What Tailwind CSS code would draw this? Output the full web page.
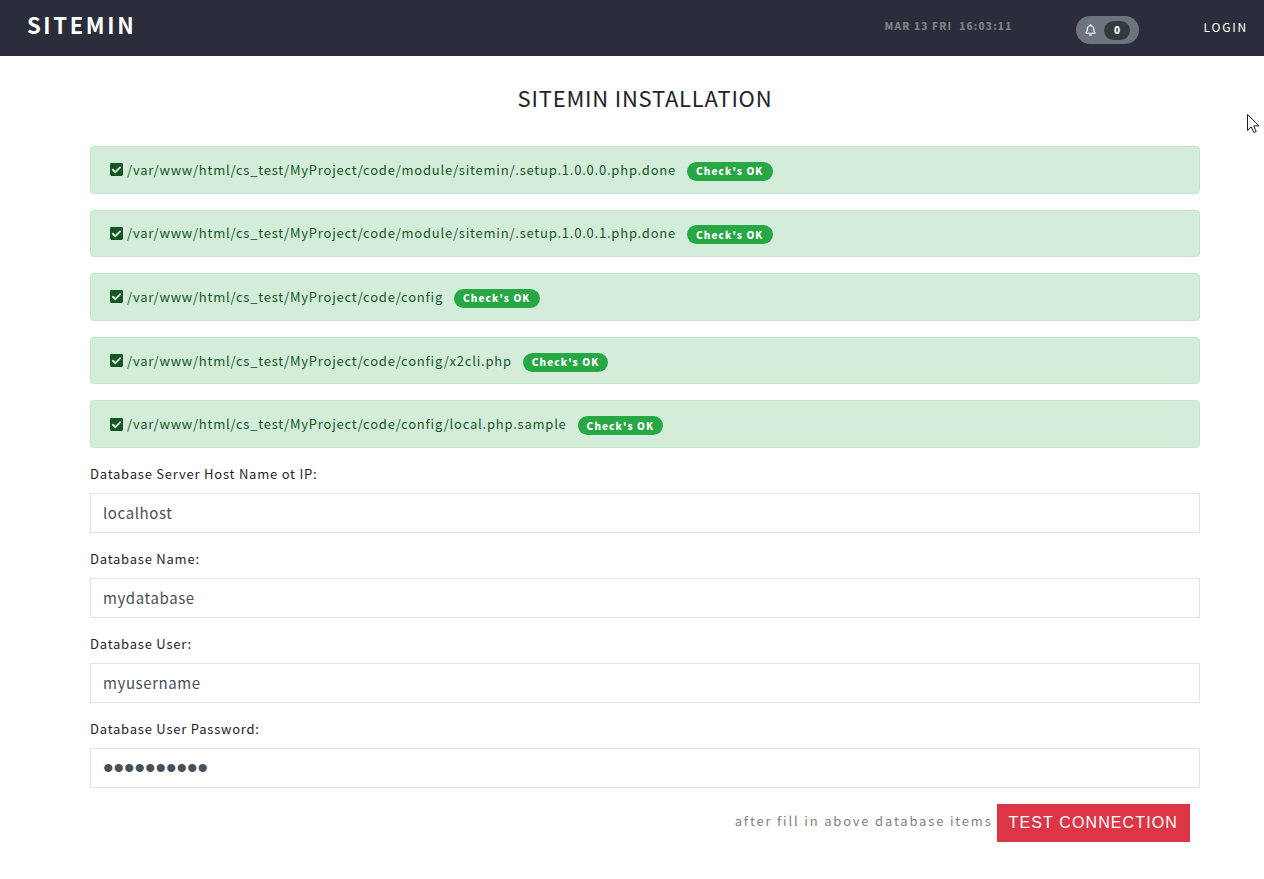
<!DOCTYPE html>
<html lang="en">
<head>
<meta charset="utf-8">
<meta name="viewport" content="width=device-width, initial-scale=1">
<title>Sitemin Installation</title>
<script src="https://cdn.jsdelivr.net/npm/@tailwindcss/browser@4"></script>
</head>
<body class="min-h-screen bg-white font-['Noto_Sans_CJK_SC',sans-serif] text-[13px] leading-5 tracking-[0.06em] text-[#212529]">
<svg class="hidden">
  <symbol id="check" viewBox="0 32 448 448"><path fill="currentColor" d="M400 480H48c-26.500 0-48-21.500-48-48V80c0-26.500 21.500-48 48-48h352c26.500 0 48 21.500 48 48v352c0 26.500-21.500 48-48 48zm-204.700-98.100l184-184c6.200-6.200 6.200-16.400 0-22.600l-22.600-22.600c-6.200-6.200-16.400-6.200-22.600 0L184 302.700l-70.100-70.100c-6.200-6.200-16.400-6.200-22.600 0l-22.600 22.600c-6.200 6.200-6.200 16.400 0 22.600l104 104c6.200 6.300 16.400 6.300 22.600 .1z"/></symbol>
</svg>

<header class="flex h-14 items-center bg-[#2c2d3a] pr-4 pl-[27px] text-white">
  <a href="#" class="mb-2 text-[22px] leading-8 font-bold tracking-[0.12em]">SITEMIN</a>
  <div class="ml-auto flex items-center">
    <time class="mr-16 mb-1 text-[10px] font-black tracking-[0.12em] whitespace-pre text-[#808080]">MAR 13 FRI  16:03:11</time>
    <button class="mt-1 mr-16 flex h-7 items-center gap-2 rounded-full bg-[#6c757d] px-[9px]" aria-label="Notifications">
      <svg class="h-[12px] w-[11px]" viewBox="0 0 448 512" aria-hidden="true"><path fill="currentColor" d="M439.390 362.290c-19.320-20.760-55.470-51.990-55.470-154.290 0-77.700-54.480-139.900-127.940-155.160V32c0-17.670-14.320-32-31.980-32s-31.980 14.330-31.980 32v20.840C118.560 68.100 64.080 130.300 64.080 208c0 102.300-36.150 133.530-55.470 154.290-6 6.450-8.660 14.160-8.610 21.710.11 16.400 12.980 32 32.100 32h383.800c19.120 0 32-15.600 32.100-32 .05-7.550-2.610-15.270-8.610-21.710zM67.530 368c21.220-27.970 44.420-74.330 44.530-159.420 0-.2-.06-.38-.06-.58 0-61.860 50.140-112 112-112s112 50.140 112 112c0 .2-.06.38-.06.58.11 85.100 23.310 131.460 44.530 159.420H67.530zM224 512c35.320 0 63.970-28.650 63.970-64H160.030c0 35.350 28.650 64 63.970 64z"/></svg>
      <span class="flex h-[19px] w-[26px] items-center justify-center rounded-full bg-[#343a40] pr-px text-[10px] font-black tracking-normal">0</span>
    </button>
    <a href="#" class="mb-0.5 text-[12px] tracking-[0.15em]">LOGIN</a>
  </div>
</header>

<main class="pr-16 pl-[90px]">
  <h1 class="pt-[25px] text-center text-[22px] leading-8">SITEMIN INSTALLATION</h1>

  <ul class="mt-[33px] grid min-h-[302px] auto-rows-fr gap-4 text-[#155724]">
    <li class="flex items-center rounded border border-[#c3e6cb] bg-[#d4edda] px-[19px]"><svg class="mr-1 size-[13px]" aria-hidden="true"><use href="#check"/></svg><span>/var/www/html/cs_test/MyProject/code/module/sitemin/.setup.1.0.0.0.php.done</span><span class="mt-[3px] ml-[11px] flex h-[19px] items-center rounded-full bg-[#28a745] px-[9px] text-[10px] font-black tracking-[0.11em] text-white">Check's OK</span></li>
    <li class="flex items-center rounded border border-[#c3e6cb] bg-[#d4edda] px-[19px]"><svg class="mr-1 size-[13px]" aria-hidden="true"><use href="#check"/></svg><span>/var/www/html/cs_test/MyProject/code/module/sitemin/.setup.1.0.0.1.php.done</span><span class="mt-[3px] ml-[11px] flex h-[19px] items-center rounded-full bg-[#28a745] px-[9px] text-[10px] font-black tracking-[0.11em] text-white">Check's OK</span></li>
    <li class="flex items-center rounded border border-[#c3e6cb] bg-[#d4edda] px-[19px]"><svg class="mr-1 size-[13px]" aria-hidden="true"><use href="#check"/></svg><span>/var/www/html/cs_test/MyProject/code/config</span><span class="mt-[3px] ml-[11px] flex h-[19px] items-center rounded-full bg-[#28a745] px-[9px] text-[10px] font-black tracking-[0.11em] text-white">Check's OK</span></li>
    <li class="flex items-center rounded border border-[#c3e6cb] bg-[#d4edda] px-[19px]"><svg class="mr-1 size-[13px]" aria-hidden="true"><use href="#check"/></svg><span>/var/www/html/cs_test/MyProject/code/config/x2cli.php</span><span class="mt-[3px] ml-[11px] flex h-[19px] items-center rounded-full bg-[#28a745] px-[9px] text-[10px] font-black tracking-[0.11em] text-white">Check's OK</span></li>
    <li class="flex items-center rounded border border-[#c3e6cb] bg-[#d4edda] px-[19px]"><svg class="mr-1 size-[13px]" aria-hidden="true"><use href="#check"/></svg><span>/var/www/html/cs_test/MyProject/code/config/local.php.sample</span><span class="mt-[3px] ml-[11px] flex h-[19px] items-center rounded-full bg-[#28a745] px-[9px] text-[10px] font-black tracking-[0.11em] text-white">Check's OK</span></li>
  </ul>

  <form class="mt-4 flex flex-col gap-4">
    <div class="flex flex-col gap-[9px]">
      <label for="host">Database Server Host Name ot IP:</label>
      <input id="host" type="text" value="localhost" class="h-10 w-full border border-[#e3e3e3] px-3 pb-0.5 text-[15px] tracking-[0.04em] text-[#495057]">
    </div>
    <div class="flex flex-col gap-[9px]">
      <label for="name">Database Name:</label>
      <input id="name" type="text" value="mydatabase" class="h-10 w-full border border-[#e3e3e3] px-3 pb-0.5 text-[15px] tracking-[0.04em] text-[#495057]">
    </div>
    <div class="flex flex-col gap-[9px]">
      <label for="user">Database User:</label>
      <input id="user" type="text" value="myusername" class="h-10 w-full border border-[#e3e3e3] px-3 pb-0.5 text-[15px] tracking-[0.04em] text-[#495057]">
    </div>
    <div class="flex flex-col gap-[9px]">
      <label for="pass">Database User Password:</label>
      <input id="pass" type="password" value="mypassword" class="h-10 w-full border border-[#e3e3e3] px-3 font-['Liberation_Sans',sans-serif] text-[30px] tracking-normal text-[#495057]">
    </div>
    <div class="flex items-center justify-end pr-2.5">
      <span class="mr-1 mb-1 tracking-[0.14em] text-[#808080]">after fill in above database items</span>
      <button type="button" class="h-[38px] bg-[#dc3545] px-3 font-['Liberation_Sans',sans-serif] text-base tracking-[0.07em] text-white">TEST CONNECTION</button>
    </div>
  </form>
</main>

<svg class="pointer-events-none absolute top-[113px] right-1 h-[21px] w-[13px]" viewBox="0 0 13 21" aria-hidden="true"><path d="M.5 1.500v16l3.700-3.600 2.600 5.600 2.400-1-2.500-5.600H12z" fill="#fff" stroke="#1c1c28"/></svg>
</body>
</html>
